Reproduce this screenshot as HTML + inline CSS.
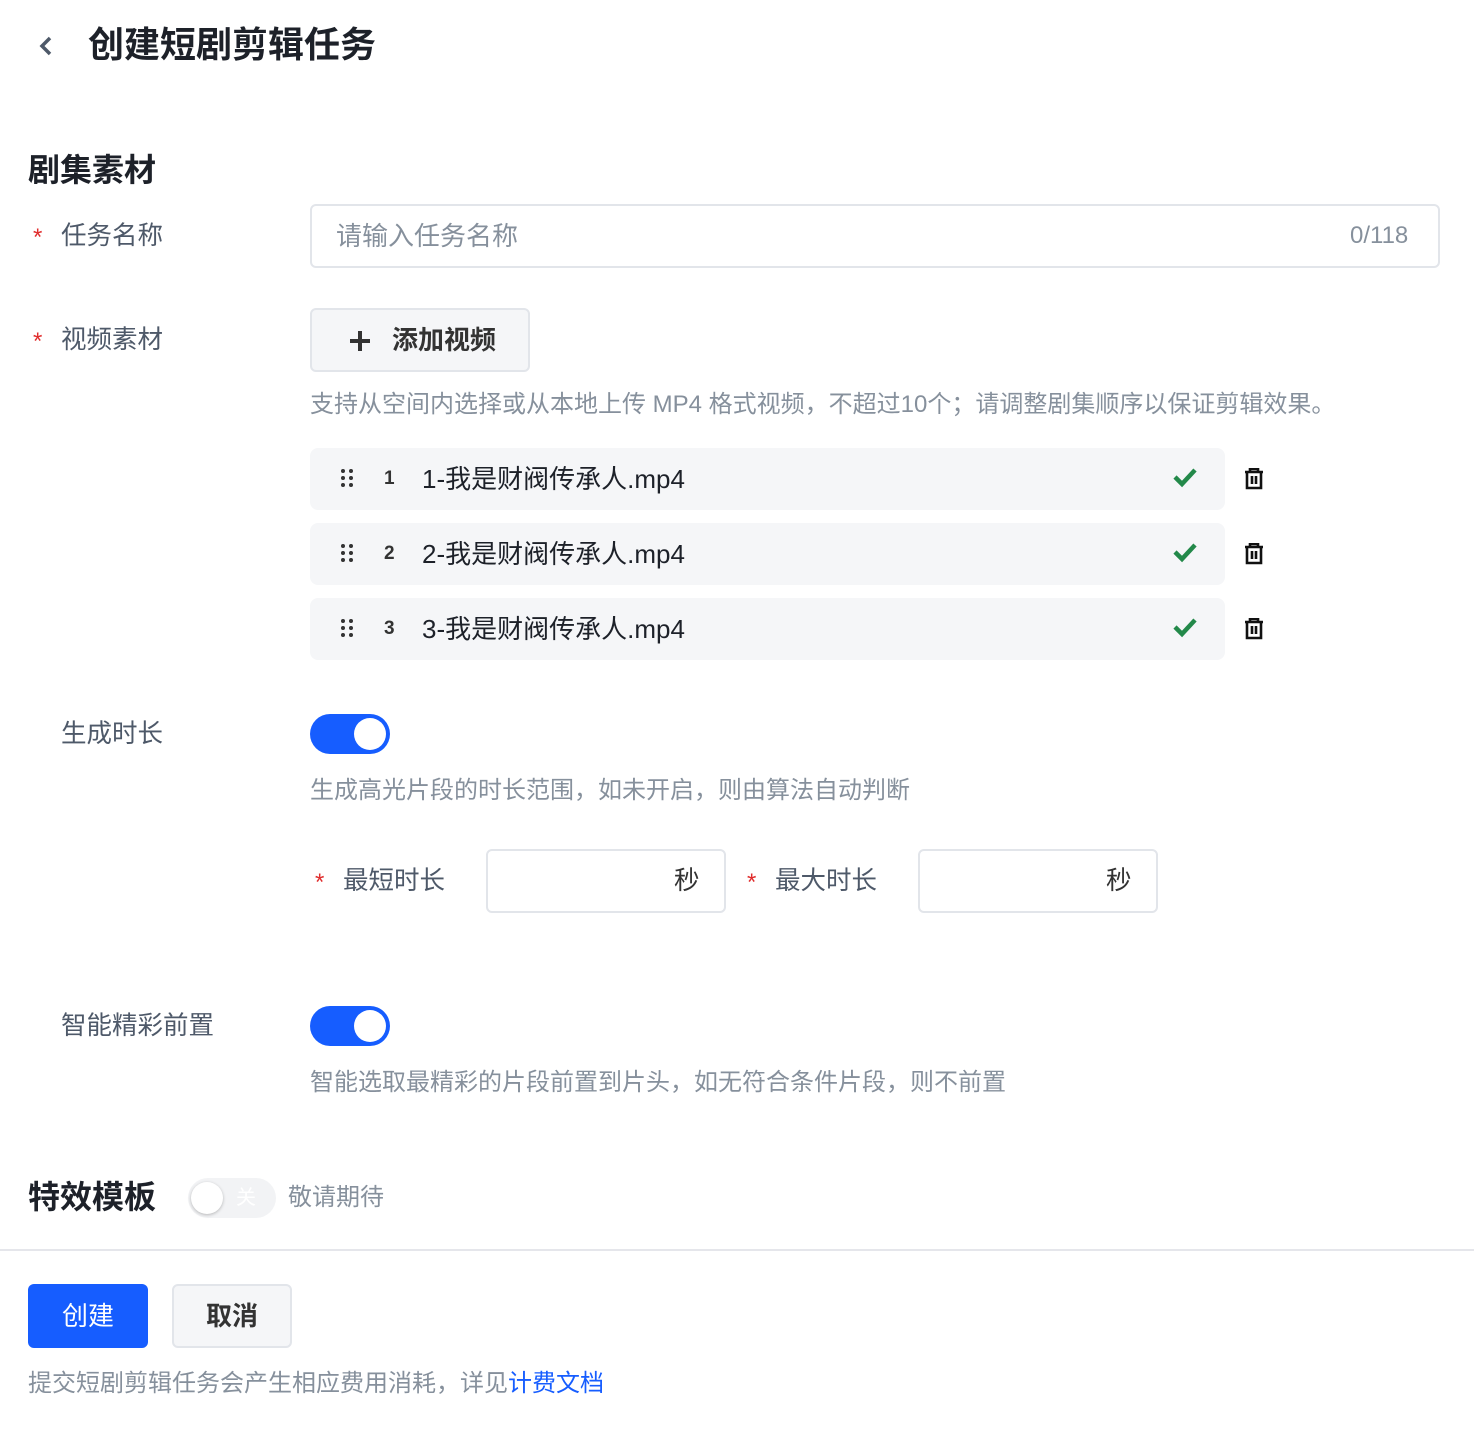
<!DOCTYPE html>
<html><head><meta charset="utf-8"><style>
*{margin:0;padding:0;box-sizing:border-box}
body{width:1474px;height:1430px;background:#fff;font-family:"Liberation Sans","Noto Sans CJK SC",sans-serif;position:relative;overflow:hidden;color:#1d2129}
.a{position:absolute;white-space:nowrap}
.lbl{font-size:25.5px;color:#4e5969;line-height:30px}
.star{position:absolute;color:#e02d2d;font-size:24px;line-height:30px}
.hint{font-size:24px;color:#86909c;line-height:30px}
.row{position:absolute;left:310px;width:915px;height:62px;background:#f5f6f8;border-radius:8px}
.row .dots{position:absolute;left:340px}
.row .dots{left:30px;top:20px}
.row .n{position:absolute;left:74px;top:0;line-height:62px;font-size:19px;font-weight:bold;color:#333}
.row .f{position:absolute;left:112px;top:0;line-height:62px;font-size:26px;color:#1d2129}
.row svg.ck{position:absolute;left:862px;top:18px}
.tr{position:absolute;left:1243px}
.sw{position:absolute;left:310px;width:80px;height:40px;border-radius:20px;background:#165dff}
.sw:after{content:"";position:absolute;right:4px;top:4px;width:32px;height:32px;border-radius:50%;background:#fff}
.inp{position:absolute;border:2px solid #e2e5ea;border-radius:6px;background:#fff}
</style></head><body>
<svg class="a" style="left:36px;top:34px" width="20" height="24" viewBox="0 0 20 24"><path d="M14 4 L6 12 L14 20" stroke="#4e5969" stroke-width="3.5" fill="none"/></svg>
<div class="a" style="left:88px;top:21px;font-size:36px;font-weight:bold;color:#1d2129;line-height:48px">创建短剧剪辑任务</div>
<div class="a" style="left:28px;top:150px;font-size:32px;font-weight:bold;line-height:40px">剧集素材</div>

<span class="star" style="left:33px;top:223px">*</span><div class="a lbl" style="left:61px;top:221px">任务名称</div>
<div class="inp" style="left:310px;top:204px;width:1130px;height:64px"></div>
<div class="a" style="left:336px;top:221px;font-size:26px;color:#86909c;line-height:30px">请输入任务名称</div>
<div class="a" style="left:1350px;top:222px;font-size:24px;color:#86909c;line-height:28px">0/118</div>

<span class="star" style="left:33px;top:327px">*</span><div class="a lbl" style="left:61px;top:325px">视频素材</div>
<div class="a" style="left:310px;top:308px;width:220px;height:64px;border:2px solid #e2e5ea;border-radius:6px;background:#f5f6f8"></div>
<svg class="a" style="left:348px;top:329px" width="24" height="24"><path d="M12 2V22M2 12H22" stroke="#333" stroke-width="4"/></svg>
<div class="a" style="left:392px;top:324px;font-size:26px;font-weight:bold;color:#333;line-height:32px">添加视频</div>
<div class="a hint" style="left:310px;top:390px">支持从空间内选择或从本地上传 MP4 格式视频，不超过10个；请调整剧集顺序以保证剪辑效果。</div>

<div class="row" style="top:448px"><svg class="dots" width="14" height="20"><g fill="#333"><circle cx="3" cy="3" r="2"/><circle cx="11" cy="3" r="2"/><circle cx="3" cy="10" r="2"/><circle cx="11" cy="10" r="2"/><circle cx="3" cy="17" r="2"/><circle cx="11" cy="17" r="2"/></g></svg><span class="n">1</span><span class="f">1-我是财阀传承人.mp4</span><svg class="ck" width="26" height="22"><path d="M3 11 L10 18 L23 4" stroke="#23894a" stroke-width="4.5" fill="none"/></svg></div>
<div class="row" style="top:523px"><svg class="dots" width="14" height="20"><g fill="#333"><circle cx="3" cy="3" r="2"/><circle cx="11" cy="3" r="2"/><circle cx="3" cy="10" r="2"/><circle cx="11" cy="10" r="2"/><circle cx="3" cy="17" r="2"/><circle cx="11" cy="17" r="2"/></g></svg><span class="n">2</span><span class="f">2-我是财阀传承人.mp4</span><svg class="ck" width="26" height="22"><path d="M3 11 L10 18 L23 4" stroke="#23894a" stroke-width="4.5" fill="none"/></svg></div>
<div class="row" style="top:598px"><svg class="dots" width="14" height="20"><g fill="#333"><circle cx="3" cy="3" r="2"/><circle cx="11" cy="3" r="2"/><circle cx="3" cy="10" r="2"/><circle cx="11" cy="10" r="2"/><circle cx="3" cy="17" r="2"/><circle cx="11" cy="17" r="2"/></g></svg><span class="n">3</span><span class="f">3-我是财阀传承人.mp4</span><svg class="ck" width="26" height="22"><path d="M3 11 L10 18 L23 4" stroke="#23894a" stroke-width="4.5" fill="none"/></svg></div>
<svg class="tr" style="top:468px" width="22" height="22"><path d="M2 4H20M7 4V1H15V4M4 4V20H18V4M9 8V16M13 8V16" stroke="#111" stroke-width="2.6" fill="none"/></svg>
<svg class="tr" style="top:543px" width="22" height="22"><path d="M2 4H20M7 4V1H15V4M4 4V20H18V4M9 8V16M13 8V16" stroke="#111" stroke-width="2.6" fill="none"/></svg>
<svg class="tr" style="top:618px" width="22" height="22"><path d="M2 4H20M7 4V1H15V4M4 4V20H18V4M9 8V16M13 8V16" stroke="#111" stroke-width="2.6" fill="none"/></svg>

<div class="a lbl" style="left:61px;top:719px">生成时长</div>
<div class="sw" style="top:714px"></div>
<div class="a hint" style="left:310px;top:776px">生成高光片段的时长范围，如未开启，则由算法自动判断</div>
<span class="star" style="left:315px;top:868px">*</span><div class="a lbl" style="left:343px;top:866px">最短时长</div>
<div class="inp" style="left:486px;top:849px;width:240px;height:64px"></div>
<div class="a lbl" style="left:674px;top:866px;color:#333">秒</div>
<span class="star" style="left:747px;top:868px">*</span><div class="a lbl" style="left:775px;top:866px">最大时长</div>
<div class="inp" style="left:918px;top:849px;width:240px;height:64px"></div>
<div class="a lbl" style="left:1106px;top:866px;color:#333">秒</div>

<div class="a lbl" style="left:61px;top:1011px">智能精彩前置</div>
<div class="sw" style="top:1006px"></div>
<div class="a hint" style="left:310px;top:1068px">智能选取最精彩的片段前置到片头，如无符合条件片段，则不前置</div>

<div class="a" style="left:28px;top:1177px;font-size:32px;font-weight:bold;line-height:40px">特效模板</div>
<div class="a" style="left:188px;top:1178px;width:88px;height:40px;border-radius:20px;background:#f2f3f5"></div>
<div class="a" style="left:191px;top:1182px;width:32px;height:32px;border-radius:50%;background:#fff;box-shadow:0 1px 3px rgba(0,0,0,.25)"></div>
<div class="a" style="left:236px;top:1184px;font-size:20px;color:#fff;line-height:28px">关</div>
<div class="a hint" style="left:288px;top:1183px">敬请期待</div>
<div class="a" style="left:0;top:1249px;width:1474px;height:2px;background:#e5e6eb"></div>

<div class="a" style="left:28px;top:1284px;width:120px;height:64px;border-radius:6px;background:#165dff;color:#fff;font-size:26px;text-align:center;line-height:64px">创建</div>
<div class="a" style="left:172px;top:1284px;width:120px;height:64px;border-radius:6px;background:#f5f6f8;border:2px solid #e2e5ea;color:#333;font-size:26px;font-weight:bold;text-align:center;line-height:60px">取消</div>
<div class="a hint" style="left:28px;top:1369px">提交短剧剪辑任务会产生相应费用消耗，详见<span style="color:#165dff">计费文档</span></div>
</body></html>
